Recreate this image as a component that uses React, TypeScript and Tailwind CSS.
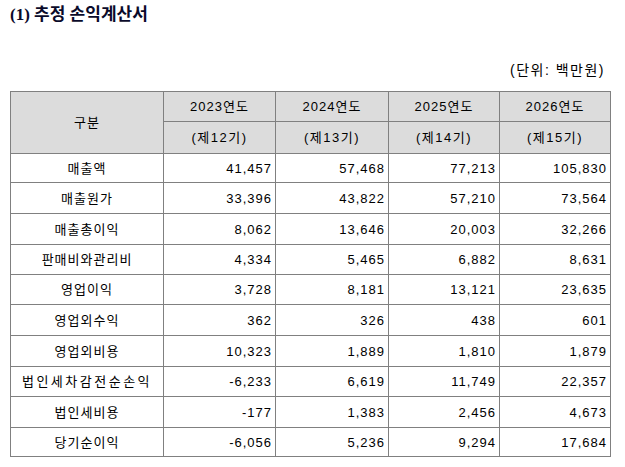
import React from "react";

type Row = { label: string; vals: string[]; h: string; wide?: boolean };

const rows: Row[] = [
  { label: "매출액", vals: ["41,457", "57,468", "77,213", "105,830"], h: "h-[29px]" },
  { label: "매출원가", vals: ["33,396", "43,822", "57,210", "73,564"], h: "h-[31px]" },
  { label: "매출총이익", vals: ["8,062", "13,646", "20,003", "32,266"], h: "h-[31px]" },
  { label: "판매비와관리비", vals: ["4,334", "5,465", "6,882", "8,631"], h: "h-[30px]" },
  { label: "영업이익", vals: ["3,728", "8,181", "13,121", "23,635"], h: "h-[30px]" },
  { label: "영업외수익", vals: ["362", "326", "438", "601"], h: "h-[31px]" },
  { label: "영업외비용", vals: ["10,323", "1,889", "1,810", "1,879"], h: "h-[31px]" },
  { label: "법인세차감전순손익", vals: ["-6,233", "6,619", "11,749", "22,357"], h: "h-[30px]", wide: true },
  { label: "법인세비용", vals: ["-177", "1,383", "2,456", "4,673"], h: "h-[31px]" },
  { label: "당기순이익", vals: ["-6,056", "5,236", "9,294", "17,684"], h: "h-[29px]" },
];

const years = [
  ["2023연도", "(제12기)"],
  ["2024연도", "(제13기)"],
  ["2025연도", "(제14기)"],
  ["2026연도", "(제15기)"],
];

export default function App() {
  return (
    <div className="w-[625px] h-[467px] bg-white text-black overflow-hidden font-['Liberation_Sans','Noto_Sans_CJK_KR',sans-serif]">
      <div className="pl-[10px] pt-[5px] h-[26px] text-[17px] font-bold leading-[20px] text-[#0a0a2a] font-['Liberation_Serif','Noto_Sans_CJK_KR',serif]">
        (1) 추정 손익계산서
      </div>
      <div className="h-[65px] flex items-center justify-end pr-[20px] pt-[22px] text-[14px] tracking-[1.5px] leading-none">
        (단위: 백만원)
      </div>
      <table className="ml-[10px] w-[601px] table-fixed border-collapse border border-black text-[13px] tracking-[1px] leading-none">
        <colgroup>
          <col className="w-[153px]" />
          <col className="w-[112px]" />
          <col className="w-[113px]" />
          <col className="w-[111px]" />
          <col className="w-[111px]" />
        </colgroup>
        <thead>
          <tr className="h-[30px] bg-[#dcdcdc]">
            <th rowSpan={2} className="font-normal border border-[#808080] text-center">
              구분
            </th>
            {years.map((y) => (
              <th key={y[0]} className="font-normal border border-[#808080] text-center">
                {y[0]}
              </th>
            ))}
          </tr>
          <tr className="h-[32px] bg-[#dcdcdc]">
            {years.map((y) => (
              <th key={y[1]} className="font-normal border border-[#808080] text-center tracking-[1.5px]">
                {y[1]}
              </th>
            ))}
          </tr>
        </thead>
        <tbody>
          {rows.map((r) => (
            <tr key={r.label} className={r.h}>
              <td className={r.wide ? "border border-[#808080] text-center tracking-[2.5px]" : "border border-[#808080] text-center"}>
                {r.label}
              </td>
              {r.vals.map((v, j) => (
                <td key={j} className="border border-[#808080] text-right pr-[3px]">
                  {v}
                </td>
              ))}
            </tr>
          ))}
        </tbody>
      </table>
    </div>
  );
}
